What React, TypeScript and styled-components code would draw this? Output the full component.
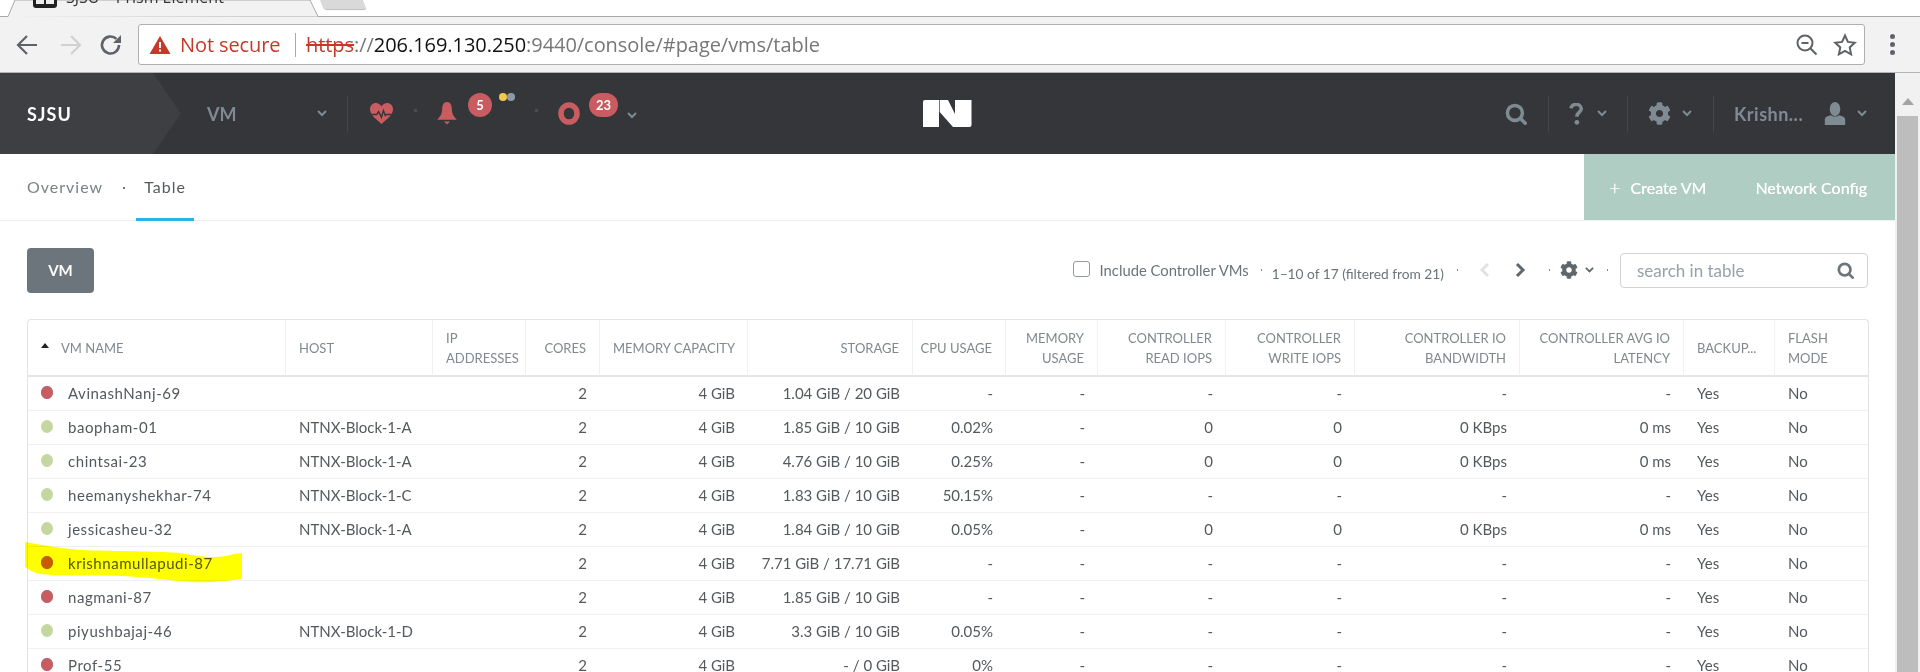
import React from 'react';
import styled, { createGlobalStyle } from 'styled-components';
import { FaCog } from 'react-icons/fa';

const GlobalStyle = createGlobalStyle`
  html, body {
    margin: 0;
    padding: 0;
    height: 672px;
    overflow: hidden;
    background: #fff;
    font-family: 'Lato', 'Liberation Sans', sans-serif;
  }
  * { box-sizing: border-box; }
`;

const Window = styled.div`
  width: 1920px;
  height: 672px;
  display: flex;
  flex-direction: column;
  overflow: hidden;
`;

const TabStrip = styled.div`
  height: 17px;
  flex: none;
  position: relative;
  background: linear-gradient(#fff 16px, #a9a9a9 16px);
  overflow: hidden;
`;
const TabShape = styled.svg`
  position: absolute;
  left: 6px;
  top: 0;
`;
const NewTab = styled.div`
  position: absolute;
  left: 321px;
  top: -6px;
  width: 42px;
  height: 15px;
  background: #d9d9d9;
  border-radius: 2px;
  box-shadow: 0 1px 1px #bbb;
  transform: skewX(22deg);
`;
const Favicon = styled.div`
  position: absolute;
  left: 33px;
  top: -16px;
  width: 24px;
  height: 24px;
  background: #222;
  border-radius: 3px;
  &::before,
  &::after {
    content: '';
    position: absolute;
    top: 15px;
    width: 8px;
    height: 5px;
    background: #eee;
  }
  &::before { left: 3px; }
  &::after { left: 13px; }
`;
const TabTitle = styled.div`
  position: absolute;
  left: 66px;
  top: -14px;
  font: 16px 'Open Sans', sans-serif;
  color: #333;
  white-space: nowrap;
`;
const TabClose = styled.div`
  position: absolute;
  left: 279px;
  top: -14px;
  font: 16px 'Liberation Sans', sans-serif;
  color: #555;
`;

const Toolbar = styled.div`
  height: 56px;
  flex: none;
  display: flex;
  align-items: center;
  background: #f2f2f2;
  border-bottom: 1px solid #b4b4b4;
  padding: 0 0 0 15px;
`;
const NavButton = styled.div<{ $w: number }>`
  width: ${p => p.$w}px;
  display: flex;
  align-items: center;
`;
const AddressBar = styled.div`
  width: 1727px;
  height: 41px;
  background: #fff;
  border: 1px solid #b0b0b0;
  border-radius: 3px;
  display: flex;
  align-items: center;
  padding: 0 7px 0 10px;
`;
const NotSecure = styled.span`
  color: #c5392a;
  font: 20px 'Open Sans', sans-serif;
  margin-left: 9px;
  width: 116px;
  letter-spacing: -0.1px;
  border-right: 1px solid #aaa;
  line-height: 24px;
`;
const Url = styled.div`
  flex: 1;
  margin-left: 10px;
  font: 20px 'Open Sans', sans-serif;
  letter-spacing: -0.05px;
  color: #777;
  white-space: nowrap;
`;
const Https = styled.span`
  color: #c5392a;
  text-decoration: line-through;
`;
const Host = styled.span`
  color: #111;
`;
const AddressIcons = styled.div`
  display: flex;
  align-items: center;
  gap: 14px;
`;
const MenuDots = styled.div`
  margin-left: 25px;
  display: flex;
  flex-direction: column;
  gap: 3px;
`;
const MenuDot = styled.i`
  width: 5px;
  height: 5px;
  border-radius: 50%;
  background: #5f6368;
  display: block;
`;

const Main = styled.div`
  flex: 1;
  display: flex;
  min-height: 0;
`;
const Page = styled.div`
  width: 1895px;
  flex: none;
  display: flex;
  flex-direction: column;
`;
const Scrollbar = styled.div`
  width: 25px;
  flex: none;
  background: #f1f1f1;
  display: flex;
  flex-direction: column;
  align-items: center;
  padding: 25px 2px 0 2px;
`;
const ScrollArrow = styled.div`
  width: 0;
  height: 0;
  border-left: 6px solid transparent;
  border-right: 6px solid transparent;
  border-bottom: 7px solid #a3a3a3;
`;
const ScrollThumb = styled.div`
  flex: 1;
  width: 21px;
  margin-top: 11px;
  background: #bdbdbd;
`;

const TopNav = styled.div`
  height: 81px;
  flex: none;
  background: #35363a;
  display: flex;
  align-items: center;
  color: #7f8b93;
  position: relative;
`;
const Brand = styled.div`
  width: 181px;
  height: 100%;
  flex: none;
  background: #3e3f43;
  clip-path: polygon(0 0, 153px 0, 181px 50%, 153px 100%, 0 100%);
  display: flex;
  align-items: center;
  padding-left: 27px;
  color: #fff;
  font: 700 18px 'Lato', sans-serif;
  letter-spacing: 1px;
`;
const VmMenu = styled.div`
  width: 167px;
  flex: none;
  height: 36px;
  display: flex;
  align-items: center;
  padding-left: 26px;
  justify-content: space-between;
  padding-right: 20px;
  border-right: 1px solid #45464a;
  font: 700 18px 'Lato', sans-serif;
  color: #7f8b93;
`;
const Cluster = styled.div<{ $ml: number }>`
  display: flex;
  align-items: center;
  flex: none;
  position: relative;
  margin-left: ${p => p.$ml}px;
`;
const Badge = styled.span<{ $w: number; $left: number }>`
  position: absolute;
  top: -9px;
  left: ${p => p.$left}px;
  width: ${p => p.$w}px;
  height: 24px;
  border-radius: 12px;
  background: #c95c60;
  color: #fff;
  font: 700 13px/24px 'Lato', sans-serif;
  text-align: center;
`;
const TinyDot = styled.i<{ $ml: number }>`
  width: 3px;
  height: 3px;
  background: #4c4d51;
  display: block;
  flex: none;
  margin: -7px 0 0 ${p => p.$ml}px;
`;
const AlertDot = styled.i<{ $c: string; $left: number }>`
  position: absolute;
  top: -9px;
  left: ${p => p.$left}px;
  width: 8px;
  height: 8px;
  border-radius: 50%;
  background: ${p => p.$c};
  display: block;
`;
const RingChevron = styled.span`
  margin: 3px 0 0 47px;
  display: flex;
`;
const LogoSlot = styled.div`
  position: absolute;
  left: 923px;
  top: 27px;
  display: flex;
`;
const RightNav = styled.div`
  margin-left: auto;
  display: flex;
  align-items: center;
  height: 36px;
`;
const NavCell = styled.div<{ $w: number; $pl: number; $line?: boolean }>`
  width: ${p => p.$w}px;
  height: 36px;
  display: flex;
  align-items: center;
  padding-left: ${p => p.$pl}px;
  border-left: ${p => (p.$line ? '1px solid #45464a' : 'none')};
`;
const ChevronGap = styled.span<{ $ml: number }>`
  margin-left: ${p => p.$ml}px;
  display: flex;
`;
const UserName = styled.span`
  font: 700 18px 'Lato', sans-serif;
  letter-spacing: 0.5px;
  width: 69px;
  margin-right: 21px;
  white-space: nowrap;
  color: #7f8b93;
`;

const SubNav = styled.div`
  height: 67px;
  flex: none;
  display: flex;
  border-bottom: 1px solid #eceeef;
`;
const Tabs = styled.div`
  flex: 1;
  display: flex;
  align-items: center;
  padding-left: 27px;
  height: 67px;
`;
const TabLink = styled.div<{ $active?: boolean }>`
  height: 67px;
  display: flex;
  align-items: center;
  font: 16px 'Lato', sans-serif;
  letter-spacing: 1px;
  color: ${p => (p.$active ? '#55595e' : '#7b8188')};
  padding: 0 8px;
  margin-left: ${p => (p.$active ? 0 : -8)}px;
  border-bottom: ${p => (p.$active ? '3px solid #22b7e6' : '3px solid transparent')};
  width: ${p => (p.$active ? '58px' : 'auto')};
`;
const SubDot = styled.i`
  width: 2px;
  height: 2px;
  background: #777;
  margin: 0 11px 0 12px;
  display: block;
`;
const Actions = styled.div`
  width: 311px;
  height: 66px;
  background: #afcdc2;
  display: flex;
  align-items: center;
  color: #fff;
  font: 16px 'Lato', sans-serif;
  text-shadow: 0 0 0.6px #fff;
  padding-left: 25px;
`;
const Plus = styled.span`
  font-size: 20px;
  font-weight: 300;
  margin-right: 10px;
`;
const ActionLabel = styled.span<{ $gap?: number }>`
  margin-left: ${p => p.$gap || 0}px;
  white-space: nowrap;
`;

const Content = styled.div`
  padding: 26px 27px 0 27px;
  flex: 1;
`;
const ControlRow = styled.div`
  display: flex;
  align-items: center;
  height: 46px;
  margin-bottom: 26px;
`;
const EntityButton = styled.div`
  width: 67px;
  height: 45px;
  background: #6d757c;
  border-radius: 4px;
  color: #fff;
  font: 700 15px/45px 'Lato', sans-serif;
  text-align: center;
`;
const TableControls = styled.div`
  margin-left: auto;
  display: flex;
  align-items: center;
  color: #6c747b;
  font: 14px 'Lato', sans-serif;
`;
const Checkbox = styled.span`
  width: 17px;
  height: 16px;
  border: 1px solid #8f9aa3;
  border-radius: 3px;
  margin-right: 10px;
  margin-top: -2px;
`;
const Sep = styled.i<{ $l: number; $r: number }>`
  width: 1px;
  height: 2px;
  background: #888;
  display: block;
  margin: 0 ${p => p.$r}px 0 ${p => p.$l}px;
`;
const PageInfo = styled.span`
  margin-top: 6px;
  font-size: 13.75px;
  white-space: nowrap;
`;
const IncludeLabel = styled.span`
  font-size: 14.8px;
  white-space: nowrap;
`;
const PagerIcon = styled.svg<{ $ml?: number }>`
  margin-left: ${p => p.$ml || 0}px;
`;
const SearchBox = styled.div`
  width: 248px;
  height: 35px;
  border: 1px solid #cfd3d6;
  border-radius: 4px;
  padding: 0 13px 0 16px;
  display: flex;
  align-items: center;
  justify-content: space-between;
  color: #98a1a8;
  font: 17px 'Lato', sans-serif;
`;

const TableWrap = styled.div`
  position: relative;
  width: 1841px;
`;
const Grid = styled.table`
  width: 1841px;
  table-layout: fixed;
  border-collapse: separate;
  border-spacing: 0;
  border: 1px solid #e2e4e6;
  border-bottom: none;
  border-radius: 4px 4px 0 0;
  font-family: 'Lato', sans-serif;
`;
const Head = styled.th<{ $right?: boolean }>`
  height: 57px;
  padding: 0 ${p => (p.$right ? 13 : 0)}px 0 13px;
  font-size: 13px;
  font-weight: 400;
  line-height: 20px;
  color: #81888e;
  text-align: ${p => (p.$right ? 'right' : 'left')};
  border-right: 1px solid #f0f1f2;
  border-bottom: 2px solid #e3e5e7;
  white-space: pre-line;
  &:last-child { border-right: none; }
`;
const NarrowHead = styled(Head)`
  padding-left: 0;
  white-space: nowrap;
`;
const NameHead = styled.span`
  display: flex;
  align-items: center;
  gap: 12px;
`;
const SortArrow = styled.i`
  width: 0;
  height: 0;
  display: block;
  border-left: 4px solid transparent;
  border-right: 4px solid transparent;
  border-bottom: 5px solid #222;
  margin-top: -4px;
`;
const Cell = styled.td<{ $right?: boolean }>`
  height: 34px;
  padding: 0 13px 2px;
  font-size: 15px;
  color: #54595e;
  text-align: ${p => (p.$right ? 'right' : 'left')};
  border-bottom: 1px solid #eff0f1;
  white-space: nowrap;
  overflow: hidden;
`;
const NameCell = styled.div`
  display: flex;
  align-items: center;
  gap: 15px;
  letter-spacing: 0.55px;
`;
const StatusDot = styled.i<{ $on: boolean }>`
  width: 12px;
  height: 13px;
  border-radius: 50%;
  display: block;
  flex: none;
  background: ${p => (p.$on ? '#c5d6a1' : '#c95c60')};
  box-shadow: ${p => (p.$on ? 'none' : 'inset 0 0 0 1px #b9687a')};
`;
const Highlight = styled.svg`
  position: absolute;
  left: -2px;
  top: 223px;
  mix-blend-mode: multiply;
  pointer-events: none;
`;

const IconArrow = ({ stroke }: { stroke: string }) => (
  <svg width="24" height="24" viewBox="0 0 24 24" fill="none" stroke={stroke} strokeWidth="2.2">
    <path d="M22 12H3M12 3l-9 9 9 9" />
  </svg>
);
const IconChevron = ({ c = '#7f8b93', w = 10 }: { c?: string; w?: number }) => (
  <svg width={w} height={w * 0.7} viewBox="0 0 10 7" fill="none" stroke={c} strokeWidth="2">
    <path d="M1 1l4 4 4-4" />
  </svg>
);
const IconSearch = ({ c, size }: { c: string; size: number }) => (
  <svg width={size} height={size} viewBox="0 0 20 20" fill="none" stroke={c} strokeWidth="3.2" strokeLinecap="round">
    <circle cx="9" cy="9" r="6.8" />
    <path d="M14 14l4.4 4.4" />
  </svg>
);

type Row = {
  name: string;
  on: boolean;
  host: string;
  storage: string;
  cpu: string;
  read: string;
  write: string;
  bw: string;
  lat: string;
};
const rows: Row[] = [
  { name: 'AvinashNanj-69', on: false, host: '', storage: '1.04 GiB / 20 GiB', cpu: '-', read: '-', write: '-', bw: '-', lat: '-' },
  { name: 'baopham-01', on: true, host: 'NTNX-Block-1-A', storage: '1.85 GiB / 10 GiB', cpu: '0.02%', read: '0', write: '0', bw: '0 KBps', lat: '0 ms' },
  { name: 'chintsai-23', on: true, host: 'NTNX-Block-1-A', storage: '4.76 GiB / 10 GiB', cpu: '0.25%', read: '0', write: '0', bw: '0 KBps', lat: '0 ms' },
  { name: 'heemanyshekhar-74', on: true, host: 'NTNX-Block-1-C', storage: '1.83 GiB / 10 GiB', cpu: '50.15%', read: '-', write: '-', bw: '-', lat: '-' },
  { name: 'jessicasheu-32', on: true, host: 'NTNX-Block-1-A', storage: '1.84 GiB / 10 GiB', cpu: '0.05%', read: '0', write: '0', bw: '0 KBps', lat: '0 ms' },
  { name: 'krishnamullapudi-87', on: false, host: '', storage: '7.71 GiB / 17.71 GiB', cpu: '-', read: '-', write: '-', bw: '-', lat: '-' },
  { name: 'nagmani-87', on: false, host: '', storage: '1.85 GiB / 10 GiB', cpu: '-', read: '-', write: '-', bw: '-', lat: '-' },
  { name: 'piyushbajaj-46', on: true, host: 'NTNX-Block-1-D', storage: '3.3 GiB / 10 GiB', cpu: '0.05%', read: '-', write: '-', bw: '-', lat: '-' },
  { name: 'Prof-55', on: false, host: '', storage: '- / 0 GiB', cpu: '0%', read: '-', write: '-', bw: '-', lat: '-' },
];

const colWidths = [258, 147, 93, 74, 148, 165, 93, 92, 128, 129, 165, 164, 91, 93];

export default function App() {
  return (
    <Window>
      <GlobalStyle />
      <TabStrip>
        <TabShape width="320" height="17" viewBox="0 0 320 17">
          <path d="M0 17V16.500H2L9 0H304L312 16.500" fill="#f2f2f2" stroke="#a9a9a9" />
        </TabShape>
        <Favicon />
        <TabTitle>SJSU – Prism Element</TabTitle>
        <TabClose>×</TabClose>
        <NewTab />
      </TabStrip>

      <Toolbar>
        <NavButton $w={44}><IconArrow stroke="#5f6368" /></NavButton>
        <NavButton $w={40}>
          <svg width="24" height="24" viewBox="0 0 24 24" fill="none" stroke="#d0d0d0" strokeWidth="2.2">
            <path d="M2 12h19M12 3l9 9-9 9" />
          </svg>
        </NavButton>
        <NavButton $w={39}>
          <svg width="24" height="24" viewBox="0 0 24 24" fill="none" stroke="#5f6368" strokeWidth="2.6">
            <path d="M20 12a8.500 8.500 0 1 1-2.600-6.100" />
            <path d="M22 2v8h-8z" fill="#5f6368" stroke="none" />
          </svg>
        </NavButton>
        <AddressBar>
          <svg width="22" height="20" viewBox="0 0 22 20">
            <path d="M11 1l10.500 18H.5z" fill="#c5392a" />
            <rect x="10" y="7" width="2" height="6" fill="#fff" />
            <rect x="10" y="14.500" width="2" height="2" fill="#fff" />
          </svg>
          <NotSecure>Not secure</NotSecure>
          <Url>
            <Https>https</Https>://<Host>206.169.130.250</Host>:9440/console/#page/vms/table
          </Url>
          <AddressIcons>
            <svg width="24" height="24" viewBox="0 0 24 24" fill="none" stroke="#5f6368" strokeWidth="2">
              <circle cx="10" cy="10" r="7.500" />
              <path d="M6.500 10h7M15.500 15.500l6 6" />
            </svg>
            <svg width="24" height="24" viewBox="0 0 24 24" fill="none" stroke="#5f6368" strokeWidth="2">
              <path d="M12 2.500l2.900 6.400 6.900.8-5.100 4.700 1.400 6.900-6.100-3.500-6.100 3.500 1.400-6.900L2.200 9.700l6.900-.8z" />
            </svg>
          </AddressIcons>
        </AddressBar>
        <MenuDots>
          <MenuDot />
          <MenuDot />
          <MenuDot />
        </MenuDots>
      </Toolbar>

      <Main>
        <Page>
          <TopNav>
            <Brand>SJSU</Brand>
            <VmMenu>
              VM
              <IconChevron />
            </VmMenu>
            <Cluster $ml={21}>
              <svg width="25" height="23" viewBox="0 0 26 24">
                <path d="M13 23C9 19 1 14 1 7.500 1 3.500 4 1 7 1c2.500 0 4.700 1.300 6 3.500C14.300 2.300 16.500 1 19 1c3 0 6 2.500 6 6.500C25 14 17 19 13 23z" fill="#c95c60" />
                <path d="M1 13h7l2-3 3 6 2-7 2 5 1-1h8" fill="none" stroke="#35363a" strokeWidth="1.500" />
              </svg>
            </Cluster>
            <TinyDot $ml={20} />
            <Cluster $ml={19}>
              <svg width="22" height="23" viewBox="0 0 24 26">
                <path d="M12 0c4 0 5.500 4 5.500 8 0 5 1.500 8 5.500 12H1c4-4 5.500-7 5.500-12C6.500 4 8 0 12 0z" fill="#c95c60" />
                <path d="M8.500 22h7L12 25.500z" fill="#c95c60" />
              </svg>
              <Badge $w={24} $left={32}>5</Badge>
              <AlertDot $c="#f2c94c" $left={63} />
              <AlertDot $c="#8d9ba6" $left={71} />
            </Cluster>
            <TinyDot $ml={77} />
            <Cluster $ml={20}>
              <svg width="22" height="23" viewBox="0 0 22 23">
                <ellipse cx="11" cy="11.500" rx="8" ry="8.500" fill="none" stroke="#c95c60" strokeWidth="5.500" />
              </svg>
              <Badge $w={29} $left={31}>23</Badge>
              <RingChevron><IconChevron /></RingChevron>
            </Cluster>
            <LogoSlot>
              <svg width="49" height="27" viewBox="0 0 49 27">
                <path d="M2 0H16V27H0V2a2 2 0 0 1 2-2z" fill="#fff" />
                <path d="M16.700 0H25L32 14V27H30L16.700 12z" fill="#fff" />
                <path d="M32 0H48.500V25a2 2 0 0 1-2 2H32z" fill="#fff" />
              </svg>
            </LogoSlot>
            <RightNav>
              <NavCell $w={64} $pl={21}><IconSearch c="#7f8b93" size={22} /></NavCell>
              <NavCell $w={79} $pl={19} $line>
                <svg width="16" height="22" viewBox="0 0 16 25">
                  <path d="M2 6c1-3 3-4.500 6-4.500S14 3.500 14 6.500c0 4-5 4-5 9" fill="none" stroke="#7f8b93" strokeWidth="4" />
                  <circle cx="9" cy="22" r="2.700" fill="#7f8b93" />
                </svg>
                <ChevronGap $ml={13}><IconChevron /></ChevronGap>
              </NavCell>
              <NavCell $w={86} $pl={20} $line>
                <FaCog size={23} color="#7f8b93" />
                <ChevronGap $ml={11}><IconChevron /></ChevronGap>
              </NavCell>
              <NavCell $w={182} $pl={20} $line>
                <UserName>Krishn...</UserName>
                <svg width="22" height="23" viewBox="0 0 23 26">
                  <ellipse cx="11.500" cy="8" rx="6" ry="8" fill="#7f8b93" />
                  <path d="M0 26v-6c0-3 3-4 7-5 2 2 7 2 9 0 4 1 7 2 7 5v6z" fill="#7f8b93" />
                </svg>
                <ChevronGap $ml={11}><IconChevron /></ChevronGap>
              </NavCell>
            </RightNav>
          </TopNav>

          <SubNav>
            <Tabs>
              <TabLink>Overview</TabLink>
              <SubDot />
              <TabLink $active>Table</TabLink>
            </Tabs>
            <Actions>
              <Plus>+</Plus>
              <ActionLabel>Create VM</ActionLabel>
              <ActionLabel $gap={49}>Network Config</ActionLabel>
            </Actions>
          </SubNav>

          <Content>
            <ControlRow>
              <EntityButton>VM</EntityButton>
              <TableControls>
                <Checkbox />
                <IncludeLabel>Include Controller VMs</IncludeLabel>
                <Sep $l={12} $r={10} />
                <PageInfo>1–10 of 17 (filtered from 21)</PageInfo>
                <Sep $l={13} $r={21} />
                <PagerIcon width="12" height="16" viewBox="0 0 12 16" fill="none" stroke="#e0e2e4" strokeWidth="3">
                  <path d="M9 2L3 8l6 6" />
                </PagerIcon>
                <PagerIcon $ml={23} width="12" height="16" viewBox="0 0 12 16" fill="none" stroke="#5f676e" strokeWidth="3">
                  <path d="M3 2l6 6-6 6" />
                </PagerIcon>
                <Sep $l={23} $r={10} />
                <FaCog size={18} color="#5f676e" />
                <ChevronGap $ml={7}><IconChevron c="#5f676e" w={9} /></ChevronGap>
                <Sep $l={13} $r={12} />
                <SearchBox>
                  search in table
                  <IconSearch c="#6d757c" size={17} />
                </SearchBox>
              </TableControls>
            </ControlRow>

            <TableWrap>
              <Grid>
                <colgroup>
                  {colWidths.map((w, i) => (
                    <col key={i} width={w} />
                  ))}
                </colgroup>
                <thead>
                  <tr>
                    <Head>
                      <NameHead>
                        <SortArrow />
                        VM NAME
                      </NameHead>
                    </Head>
                    <Head>HOST</Head>
                    <Head>{'IP\nADDRESSES'}</Head>
                    <Head $right>CORES</Head>
                    <Head>MEMORY CAPACITY</Head>
                    <Head $right>STORAGE</Head>
                    <NarrowHead $right>CPU USAGE</NarrowHead>
                    <Head $right>{'MEMORY\nUSAGE'}</Head>
                    <Head $right>{'CONTROLLER\nREAD IOPS'}</Head>
                    <Head $right>{'CONTROLLER\nWRITE IOPS'}</Head>
                    <Head $right>{'CONTROLLER IO\nBANDWIDTH'}</Head>
                    <Head $right>{'CONTROLLER AVG IO\nLATENCY'}</Head>
                    <Head>BACKUP...</Head>
                    <Head>{'FLASH\nMODE'}</Head>
                  </tr>
                </thead>
                <tbody>
                  {rows.map(r => (
                    <tr key={r.name}>
                      <Cell>
                        <NameCell>
                          <StatusDot $on={r.on} />
                          {r.name}
                        </NameCell>
                      </Cell>
                      <Cell>{r.host}</Cell>
                      <Cell />
                      <Cell $right>2</Cell>
                      <Cell $right>4 GiB</Cell>
                      <Cell $right>{r.storage}</Cell>
                      <Cell $right>{r.cpu}</Cell>
                      <Cell $right>-</Cell>
                      <Cell $right>{r.read}</Cell>
                      <Cell $right>{r.write}</Cell>
                      <Cell $right>{r.bw}</Cell>
                      <Cell $right>{r.lat}</Cell>
                      <Cell>Yes</Cell>
                      <Cell>No</Cell>
                    </tr>
                  ))}
                </tbody>
              </Grid>
              <Highlight width="218" height="41" viewBox="0 0 218 41">
                <path d="M0 0C18 3 38 7 57 8S110 9 138 10 170 15 187 15 205 12 217 11V37C200 39 185 41 167 40S120 35 97 34 50 34 28 33 8 29 0 25z" fill="#ffff00" />
              </Highlight>
            </TableWrap>
          </Content>
        </Page>
        <Scrollbar>
          <ScrollArrow />
          <ScrollThumb />
        </Scrollbar>
      </Main>
    </Window>
  );
}
